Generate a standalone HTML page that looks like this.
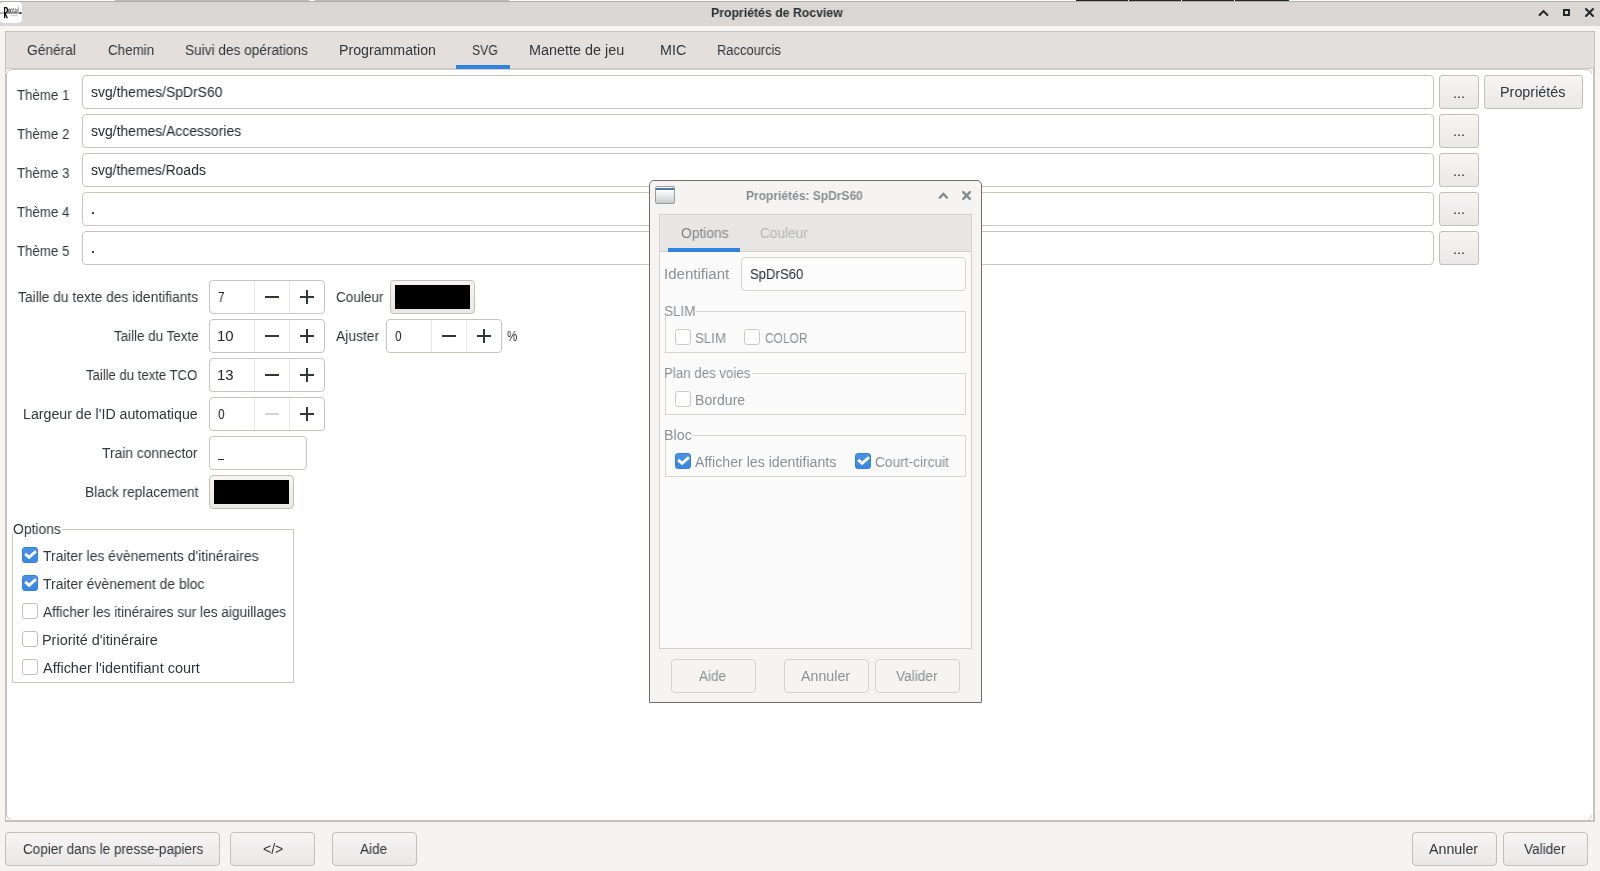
<!DOCTYPE html>
<html><head><meta charset="utf-8">
<style>
*{box-sizing:border-box;margin:0;padding:0}
html,body{width:1600px;height:871px;overflow:hidden;background:#f5f4f2;font-family:"Liberation Sans",sans-serif;font-size:13.5px;color:#31363b}
.a{position:absolute}
.t{position:absolute;white-space:pre;line-height:1;transform-origin:0 0;will-change:transform}
</style></head><body>
<div class="a" style="left:0px;top:0px;width:1600px;height:26px;background:#dad6d3"></div>
<div class="a" style="left:0px;top:0px;width:115px;height:1px;background:#fdfdfc"></div>
<div class="a" style="left:115px;top:0px;width:1485px;height:1px;background:#fdfdfc"></div>
<div class="a" style="left:115px;top:0px;width:194px;height:1px;background:#c3bab5"></div>
<div class="a" style="left:315px;top:0px;width:194px;height:1px;background:#c3bab5"></div>
<div class="a" style="left:1076px;top:0px;width:213px;height:1px;background:#20262a"></div>
<div class="a" style="left:1128px;top:0px;width:1px;height:1px;background:#fdfdfc"></div>
<div class="a" style="left:1181px;top:0px;width:1px;height:1px;background:#fdfdfc"></div>
<div class="a" style="left:1234px;top:0px;width:1px;height:1px;background:#fdfdfc"></div>
<div class="a" style="left:0px;top:1px;width:1600px;height:1px;background:#b2ada7"></div>
<div class="a" style="left:0px;top:2px;width:22px;height:21px;background:#fff;border-radius:4px"></div>
<svg class="a" style="left:0;top:0" width="23" height="26" viewBox="0 0 23 26"><path d="M0 13.1H20.5" stroke="#4a4a4a" stroke-width="0.8"/><circle cx="20.6" cy="13.1" r="1.1" fill="#222"/><path d="M4.6 18.3V7.6h1.3c1.1 0 1.6 1.1 1.6 2.5s-.6 2.5-1.6 2.5H4.8L7.3 18.3" fill="none" stroke="#111" stroke-width="1.25"/><ellipse cx="9.2" cy="10.8" rx="0.9" ry="2" fill="none" stroke="#333" stroke-width="0.8"/><path d="M11.9 9.2c-.5-.6-1.6-.3-1.6 1.6s1.1 2.2 1.6 1.6" fill="none" stroke="#333" stroke-width="0.8"/><path d="M12.9 13V8.8M12.9 9.6c.3-.7.9-.9 1.3-.8" fill="none" stroke="#333" stroke-width="0.8"/><path d="M14.8 9.2c.5-.4 1.4-.3 1.4.6V13M16.2 10.8c-1.4 0-1.8.6-1.8 1.2s.5 1 1.8.6" fill="none" stroke="#444" stroke-width="0.75"/><path d="M17.3 13V8.6M18.6 13V6.4" fill="none" stroke="#999" stroke-width="0.8"/><path d="M11.2 15.7H17.8" stroke="#c9c9c9" stroke-width="1.1"/></svg>
<svg class="a" style="left:1536px;top:6px" width="60" height="14" viewBox="0 0 60 14"><path d="M3.6 9L7.5 5.1L11.4 9" fill="none" stroke="#232629" stroke-width="2" stroke-linecap="round"/><rect x="28" y="4" width="5" height="5" fill="none" stroke="#232629" stroke-width="2"/><path d="M50 3L57 10M57 3L50 10" fill="none" stroke="#232629" stroke-width="2" stroke-linecap="round"/></svg>
<div class="a" style="left:5px;top:31px;width:1590px;height:791px;background:#fff;border:1px solid #c7c1bc;border-radius:0"></div>
<div class="a" style="left:6px;top:32px;width:1588px;height:37px;background:#e2dfdc"></div>
<div class="a" style="left:6px;top:68px;width:1588px;height:1px;background:#cdc7c2"></div>
<div class="a" style="left:6px;top:69px;width:1588px;height:1px;background:#d6d0cb"></div>
<div class="a" style="left:5px;top:820px;width:1590px;height:2px;background:#c7c1bc"></div>
<div class="a" style="left:1593px;top:69px;width:2px;height:753px;background:#c7c1bc"></div>
<div class="a" style="left:5px;top:69px;width:2px;height:753px;background:#c7c1bc"></div>
<div class="a" style="left:456px;top:65px;width:54px;height:4px;background:#3183e0"></div>
<svg class="a" style="left:6px;top:69px" width="5" height="5" viewBox="0 0 5 5"><rect width="5" height="5" fill="#fff"/><path d="M1 5A4 4 0 0 1 5 1" fill="none" stroke="#d3cdc8" stroke-width="1"/></svg>
<svg class="a" style="left:1588px;top:69px" width="5" height="5" viewBox="0 0 5 5"><rect width="5" height="5" fill="#fff"/><path d="M0 1A4 4 0 0 1 4 5" fill="none" stroke="#d3cdc8" stroke-width="1"/></svg>
<svg class="a" style="left:6px;top:815px" width="5" height="5" viewBox="0 0 5 5"><rect width="5" height="5" fill="#fff"/><path d="M1 0A4 4 0 0 0 5 4" fill="none" stroke="#d3cdc8" stroke-width="1"/></svg>
<svg class="a" style="left:1588px;top:815px" width="5" height="5" viewBox="0 0 5 5"><rect width="5" height="5" fill="#fff"/><path d="M0 4A4 4 0 0 0 4 0" fill="none" stroke="#d3cdc8" stroke-width="1"/></svg>
<div class="a" style="left:82px;top:75px;width:1352px;height:34px;background:#fff;border:1px solid #c9c3be;border-radius:4px"></div>
<div class="a" style="left:1439px;top:75px;width:40px;height:34px;background:linear-gradient(#f6f5f4,#eae8e6);border:1px solid #c5beb9;border-radius:3px"></div>
<div class="a" style="left:82px;top:114px;width:1352px;height:34px;background:#fff;border:1px solid #c9c3be;border-radius:4px"></div>
<div class="a" style="left:1439px;top:114px;width:40px;height:34px;background:linear-gradient(#f6f5f4,#eae8e6);border:1px solid #c5beb9;border-radius:3px"></div>
<div class="a" style="left:82px;top:153px;width:1352px;height:34px;background:#fff;border:1px solid #c9c3be;border-radius:4px"></div>
<div class="a" style="left:1439px;top:153px;width:40px;height:34px;background:linear-gradient(#f6f5f4,#eae8e6);border:1px solid #c5beb9;border-radius:3px"></div>
<div class="a" style="left:82px;top:192px;width:1352px;height:34px;background:#fff;border:1px solid #c9c3be;border-radius:4px"></div>
<div class="a" style="left:1439px;top:192px;width:40px;height:34px;background:linear-gradient(#f6f5f4,#eae8e6);border:1px solid #c5beb9;border-radius:3px"></div>
<div class="a" style="left:92px;top:212px;width:2px;height:2px;background:#333;border-radius:0.5px"></div>
<div class="a" style="left:82px;top:231px;width:1352px;height:34px;background:#fff;border:1px solid #c9c3be;border-radius:4px"></div>
<div class="a" style="left:1439px;top:231px;width:40px;height:34px;background:linear-gradient(#f6f5f4,#eae8e6);border:1px solid #c5beb9;border-radius:3px"></div>
<div class="a" style="left:92px;top:251px;width:2px;height:2px;background:#333;border-radius:0.5px"></div>
<div class="a" style="left:1484px;top:75px;width:99px;height:34px;background:linear-gradient(#f6f5f4,#eae8e6);border:1px solid #c5beb9;border-radius:3px"></div>
<div class="a" style="left:209px;top:280px;width:116px;height:34px;background:#fff;border:1px solid #c9c3be;border-radius:4px"></div>
<div class="a" style="left:254px;top:281px;width:1px;height:32px;background:#ebe7e4"></div>
<div class="a" style="left:289px;top:281px;width:1px;height:32px;background:#ebe7e4"></div>
<div class="a" style="left:265px;top:296px;width:14px;height:2px;background:#31363b"></div>
<div class="a" style="left:300px;top:296px;width:14px;height:2px;background:#31363b"></div>
<div class="a" style="left:306px;top:290px;width:2px;height:14px;background:#31363b"></div>
<div class="a" style="left:209px;top:319px;width:116px;height:34px;background:#fff;border:1px solid #c9c3be;border-radius:4px"></div>
<div class="a" style="left:254px;top:320px;width:1px;height:32px;background:#ebe7e4"></div>
<div class="a" style="left:289px;top:320px;width:1px;height:32px;background:#ebe7e4"></div>
<div class="a" style="left:265px;top:335px;width:14px;height:2px;background:#31363b"></div>
<div class="a" style="left:300px;top:335px;width:14px;height:2px;background:#31363b"></div>
<div class="a" style="left:306px;top:329px;width:2px;height:14px;background:#31363b"></div>
<div class="a" style="left:209px;top:358px;width:116px;height:34px;background:#fff;border:1px solid #c9c3be;border-radius:4px"></div>
<div class="a" style="left:254px;top:359px;width:1px;height:32px;background:#ebe7e4"></div>
<div class="a" style="left:289px;top:359px;width:1px;height:32px;background:#ebe7e4"></div>
<div class="a" style="left:265px;top:374px;width:14px;height:2px;background:#31363b"></div>
<div class="a" style="left:300px;top:374px;width:14px;height:2px;background:#31363b"></div>
<div class="a" style="left:306px;top:368px;width:2px;height:14px;background:#31363b"></div>
<div class="a" style="left:209px;top:397px;width:116px;height:34px;background:#fff;border:1px solid #c9c3be;border-radius:4px"></div>
<div class="a" style="left:254px;top:398px;width:1px;height:32px;background:#ebe7e4"></div>
<div class="a" style="left:289px;top:398px;width:1px;height:32px;background:#ebe7e4"></div>
<div class="a" style="left:265px;top:413px;width:14px;height:2px;background:#d5d2cf"></div>
<div class="a" style="left:300px;top:413px;width:14px;height:2px;background:#31363b"></div>
<div class="a" style="left:306px;top:407px;width:2px;height:14px;background:#31363b"></div>
<div class="a" style="left:386px;top:319px;width:116px;height:34px;background:#fff;border:1px solid #c9c3be;border-radius:4px"></div>
<div class="a" style="left:431px;top:320px;width:1px;height:32px;background:#ebe7e4"></div>
<div class="a" style="left:466px;top:320px;width:1px;height:32px;background:#ebe7e4"></div>
<div class="a" style="left:442px;top:335px;width:14px;height:2px;background:#31363b"></div>
<div class="a" style="left:477px;top:335px;width:14px;height:2px;background:#31363b"></div>
<div class="a" style="left:483px;top:329px;width:2px;height:14px;background:#31363b"></div>
<div class="a" style="left:390px;top:280px;width:85px;height:34px;background:linear-gradient(#f6f5f4,#eae8e6);border:1px solid #c5beb9;border-radius:4px"></div>
<div class="a" style="left:395px;top:285px;width:75px;height:24px;background:#000"></div>
<div class="a" style="left:209px;top:436px;width:98px;height:34px;background:#fff;border:1px solid #c9c3be;border-radius:4px"></div>
<div class="a" style="left:218px;top:459px;width:6px;height:1px;background:#333"></div>
<div class="a" style="left:209px;top:475px;width:85px;height:34px;background:linear-gradient(#f6f5f4,#eae8e6);border:1px solid #c5beb9;border-radius:4px"></div>
<div class="a" style="left:214px;top:480px;width:75px;height:24px;background:#000"></div>
<div class="a" style="left:12px;top:529px;width:282px;height:154px;border:1px solid #cdc7c2"></div>
<div class="a" style="left:12px;top:520px;width:50px;height:14px;background:#fff"></div>
<svg class="a" style="left:22px;top:547px" width="16" height="16" viewBox="0 0 16 16"><defs><linearGradient id="cg" x1="0" y1="0" x2="0" y2="1"><stop offset="0" stop-color="#4c92e5"/><stop offset="1" stop-color="#3a86e1"/></linearGradient></defs><rect x="0.5" y="0.5" width="15" height="15" rx="2.6" fill="url(#cg)" stroke="#2f7fdf"/><path d="M4.3 7.8L7.1 10.3L12.9 5.2" fill="none" stroke="#fff" stroke-width="2.9" stroke-linecap="square"/></svg>
<svg class="a" style="left:22px;top:575px" width="16" height="16" viewBox="0 0 16 16"><defs><linearGradient id="cg" x1="0" y1="0" x2="0" y2="1"><stop offset="0" stop-color="#4c92e5"/><stop offset="1" stop-color="#3a86e1"/></linearGradient></defs><rect x="0.5" y="0.5" width="15" height="15" rx="2.6" fill="url(#cg)" stroke="#2f7fdf"/><path d="M4.3 7.8L7.1 10.3L12.9 5.2" fill="none" stroke="#fff" stroke-width="2.9" stroke-linecap="square"/></svg>
<div class="a" style="left:22px;top:603px;width:16px;height:16px;background:#fff;border:1px solid #c4bdb8;border-radius:3px"></div>
<div class="a" style="left:22px;top:631px;width:16px;height:16px;background:#fff;border:1px solid #c4bdb8;border-radius:3px"></div>
<div class="a" style="left:22px;top:659px;width:16px;height:16px;background:#fff;border:1px solid #c4bdb8;border-radius:3px"></div>
<div class="a" style="left:5px;top:832px;width:215px;height:34px;background:linear-gradient(#f6f5f4,#eae8e6);border:1px solid #c5beb9;border-radius:4px"></div>
<div class="a" style="left:230px;top:832px;width:85px;height:34px;background:linear-gradient(#f6f5f4,#eae8e6);border:1px solid #c5beb9;border-radius:4px"></div>
<div class="a" style="left:332px;top:832px;width:85px;height:34px;background:linear-gradient(#f6f5f4,#eae8e6);border:1px solid #c5beb9;border-radius:4px"></div>
<div class="a" style="left:1412px;top:832px;width:85px;height:34px;background:linear-gradient(#f6f5f4,#eae8e6);border:1px solid #c5beb9;border-radius:4px"></div>
<div class="a" style="left:1503px;top:832px;width:85px;height:34px;background:linear-gradient(#f6f5f4,#eae8e6);border:1px solid #c5beb9;border-radius:4px"></div>
<div class="a" style="left:649px;top:180px;width:333px;height:523px;background:#f5f4f2;border:1px solid #6f6f6f;border-radius:5px 5px 1px 1px"></div>
<div class="a" style="left:655px;top:186px;width:20px;height:18px;border:1px solid #9a9d9f;border-radius:2px;background:linear-gradient(#fff 20%,#c8cbcc)"></div>
<div class="a" style="left:656px;top:188px;width:18px;height:2px;background:#4f77b0"></div>
<svg class="a" style="left:935px;top:186px" width="40" height="18" viewBox="0 0 40 18"><path d="M4.8 11.6L8.4 8L12 11.6" fill="none" stroke="#858a8c" stroke-width="2.3" stroke-linecap="round"/><path d="M28.2 6.1L34.9 12.8M34.9 6.1L28.2 12.8" fill="none" stroke="#858a8c" stroke-width="2.4" stroke-linecap="round"/></svg>
<div class="a" style="left:659px;top:214px;width:313px;height:435px;background:#fafafa;border:1px solid #d5d1cd"></div>
<div class="a" style="left:660px;top:215px;width:311px;height:36px;background:#e8e6e4"></div>
<div class="a" style="left:660px;top:251px;width:311px;height:1px;background:#d5d1cd"></div>
<div class="a" style="left:668px;top:248px;width:72px;height:4px;background:#3183e0"></div>
<div class="a" style="left:741px;top:257px;width:225px;height:34px;background:#fcfcfc;border:1px solid #d8d4d0;border-radius:4px"></div>
<div class="a" style="left:665px;top:311px;width:301px;height:42px;border:1px solid #d8d4d0"></div>
<div class="a" style="left:664px;top:304px;width:32.299999999999955px;height:12px;background:#fafafa"></div>
<div class="a" style="left:665px;top:373px;width:301px;height:42px;border:1px solid #d8d4d0"></div>
<div class="a" style="left:664px;top:366px;width:87.79999999999995px;height:12px;background:#fafafa"></div>
<div class="a" style="left:665px;top:435px;width:301px;height:42px;border:1px solid #d8d4d0"></div>
<div class="a" style="left:664px;top:428px;width:29px;height:12px;background:#fafafa"></div>
<div class="a" style="left:675px;top:329px;width:16px;height:16px;background:#fff;border:1px solid #cfc9c4;border-radius:3px"></div>
<div class="a" style="left:744px;top:329px;width:16px;height:16px;background:#fff;border:1px solid #cfc9c4;border-radius:3px"></div>
<div class="a" style="left:675px;top:391px;width:16px;height:16px;background:#fff;border:1px solid #cfc9c4;border-radius:3px"></div>
<svg class="a" style="left:675px;top:453px" width="16" height="16" viewBox="0 0 16 16"><defs><linearGradient id="cg" x1="0" y1="0" x2="0" y2="1"><stop offset="0" stop-color="#4c92e5"/><stop offset="1" stop-color="#3a86e1"/></linearGradient></defs><rect x="0.5" y="0.5" width="15" height="15" rx="2.6" fill="url(#cg)" stroke="#2f7fdf"/><path d="M4.3 7.8L7.1 10.3L12.9 5.2" fill="none" stroke="#fff" stroke-width="2.9" stroke-linecap="square"/></svg>
<svg class="a" style="left:855px;top:453px" width="16" height="16" viewBox="0 0 16 16"><defs><linearGradient id="cg" x1="0" y1="0" x2="0" y2="1"><stop offset="0" stop-color="#4c92e5"/><stop offset="1" stop-color="#3a86e1"/></linearGradient></defs><rect x="0.5" y="0.5" width="15" height="15" rx="2.6" fill="url(#cg)" stroke="#2f7fdf"/><path d="M4.3 7.8L7.1 10.3L12.9 5.2" fill="none" stroke="#fff" stroke-width="2.9" stroke-linecap="square"/></svg>
<div class="a" style="left:671px;top:659px;width:85px;height:34px;background:#f5f4f2;border:1px solid #d6d2ce;border-radius:4px"></div>
<div class="a" style="left:784px;top:659px;width:85px;height:34px;background:#f5f4f2;border:1px solid #d6d2ce;border-radius:4px"></div>
<div class="a" style="left:875px;top:659px;width:85px;height:34px;background:#f5f4f2;border:1px solid #d6d2ce;border-radius:4px"></div>
<div class="t" style="left:710.70px;top:6px;font-size:13px;color:#2b3034;font-weight:bold;transform:scaleX(0.9450)">Propriétés de Rocview</div>
<div class="t" style="left:26.60px;top:43px;font-size:14px;color:#31363b;transform:scaleX(0.9816)">Général</div>
<div class="t" style="left:107.50px;top:43px;font-size:14px;color:#31363b;transform:scaleX(0.9563)">Chemin</div>
<div class="t" style="left:185.33px;top:43px;font-size:14px;color:#31363b;transform:scaleX(0.9744)">Suivi des opérations</div>
<div class="t" style="left:339.39px;top:43px;font-size:14px;color:#31363b;transform:scaleX(1.0128)">Programmation</div>
<div class="t" style="left:472.33px;top:43px;font-size:14px;color:#31363b;transform:scaleX(0.8714)">SVG</div>
<div class="t" style="left:529.07px;top:43px;font-size:14px;color:#31363b;transform:scaleX(1.0275)">Manette de jeu</div>
<div class="t" style="left:660.38px;top:43px;font-size:14px;color:#31363b;transform:scaleX(1.0208)">MIC</div>
<div class="t" style="left:717.28px;top:43px;font-size:14px;color:#31363b;transform:scaleX(0.9221)">Raccourcis</div>
<div class="t" style="left:17.20px;top:88px;font-size:14px;color:#31363b;transform:scaleX(0.9491)">Thème 1</div>
<div class="t" style="left:1452.68px;top:86px;font-size:14px;color:#232629;transform:scaleX(1.0200)">...</div>
<div class="t" style="left:91.00px;top:85px;font-size:14px;color:#232629;transform:scaleX(0.9939)">svg/themes/SpDrS60</div>
<div class="t" style="left:17.20px;top:127px;font-size:14px;color:#31363b;transform:scaleX(0.9491)">Thème 2</div>
<div class="t" style="left:1452.68px;top:124px;font-size:14px;color:#232629;transform:scaleX(1.0200)">...</div>
<div class="t" style="left:91.00px;top:124px;font-size:14px;color:#232629;transform:scaleX(0.9947)">svg/themes/Accessories</div>
<div class="t" style="left:17.20px;top:166px;font-size:14px;color:#31363b;transform:scaleX(0.9491)">Thème 3</div>
<div class="t" style="left:1452.68px;top:164px;font-size:14px;color:#232629;transform:scaleX(1.0200)">...</div>
<div class="t" style="left:91.00px;top:163px;font-size:14px;color:#232629;transform:scaleX(0.9897)">svg/themes/Roads</div>
<div class="t" style="left:17.20px;top:205px;font-size:14px;color:#31363b;transform:scaleX(0.9491)">Thème 4</div>
<div class="t" style="left:1452.68px;top:202px;font-size:14px;color:#232629;transform:scaleX(1.0200)">...</div>
<div class="t" style="left:17.20px;top:244px;font-size:14px;color:#31363b;transform:scaleX(0.9491)">Thème 5</div>
<div class="t" style="left:1452.68px;top:242px;font-size:14px;color:#232629;transform:scaleX(1.0200)">...</div>
<div class="t" style="left:1500.47px;top:85px;font-size:14px;color:#31363b;transform:scaleX(1.0270)">Propriétés</div>
<div class="t" style="left:17.60px;top:290px;font-size:14px;color:#31363b;transform:scaleX(0.9847)">Taille du texte des identifiants</div>
<div class="t" style="left:113.60px;top:329px;font-size:14px;color:#31363b;transform:scaleX(0.9568)">Taille du Texte</div>
<div class="t" style="left:86.40px;top:368px;font-size:14px;color:#31363b;transform:scaleX(0.9361)">Taille du texte TCO</div>
<div class="t" style="left:23.49px;top:407px;font-size:14px;color:#31363b;transform:scaleX(1.0135)">Largeur de l'ID automatique</div>
<div class="t" style="left:102.00px;top:446px;font-size:14px;color:#31363b;transform:scaleX(0.9876)">Train connector</div>
<div class="t" style="left:84.51px;top:485px;font-size:14px;color:#31363b;transform:scaleX(0.9851)">Black replacement</div>
<div class="t" style="left:218.20px;top:290px;font-size:14px;color:#232629;transform:scaleX(0.8500)">7</div>
<div class="t" style="left:217.14px;top:329px;font-size:14px;color:#232629;transform:scaleX(1.0643)">10</div>
<div class="t" style="left:217.14px;top:368px;font-size:14px;color:#232629;transform:scaleX(1.0643)">13</div>
<div class="t" style="left:218.20px;top:407px;font-size:14px;color:#232629;transform:scaleX(0.8625)">0</div>
<div class="t" style="left:395.20px;top:329px;font-size:14px;color:#232629;transform:scaleX(0.8500)">0</div>
<div class="t" style="left:335.50px;top:290px;font-size:14px;color:#31363b;transform:scaleX(0.9694)">Couleur</div>
<div class="t" style="left:335.50px;top:329px;font-size:14px;color:#31363b;transform:scaleX(0.9886)">Ajuster</div>
<div class="t" style="left:507.40px;top:329px;font-size:14px;color:#31363b;transform:scaleX(0.8250)">%</div>
<div class="t" style="left:12.60px;top:522px;font-size:14px;color:#31363b;transform:scaleX(0.9896)">Options</div>
<div class="t" style="left:42.60px;top:549px;font-size:14px;color:#31363b;transform:scaleX(0.9931)">Traiter les évènements d'itinéraires</div>
<div class="t" style="left:42.60px;top:577px;font-size:14px;color:#31363b;transform:scaleX(0.9963)">Traiter évènement de bloc</div>
<div class="t" style="left:42.60px;top:605px;font-size:14px;color:#31363b;transform:scaleX(0.9767)">Afficher les itinéraires sur les aiguillages</div>
<div class="t" style="left:41.57px;top:633px;font-size:14px;color:#31363b;transform:scaleX(1.0306)">Priorité d'itinéraire</div>
<div class="t" style="left:42.60px;top:661px;font-size:14px;color:#31363b;transform:scaleX(1.0329)">Afficher l'identifiant court</div>
<div class="t" style="left:22.50px;top:842px;font-size:14px;color:#31363b;transform:scaleX(0.9652)">Copier dans le presse-papiers</div>
<div class="t" style="left:262.70px;top:842px;font-size:14px;color:#31363b;transform:scaleX(0.9800)">&lt;/&gt;</div>
<div class="t" style="left:360.20px;top:842px;font-size:14px;color:#31363b;transform:scaleX(0.9679)">Aide</div>
<div class="t" style="left:1429.00px;top:842px;font-size:14px;color:#31363b;transform:scaleX(1.0167)">Annuler</div>
<div class="t" style="left:1524.00px;top:842px;font-size:14px;color:#31363b;transform:scaleX(0.9744)">Valider</div>
<div class="t" style="left:745.70px;top:190px;font-size:12.5px;color:#8a8d90;font-weight:bold;transform:scaleX(0.9612)">Propriétés: SpDrS60</div>
<div class="t" style="left:680.60px;top:226px;font-size:14px;color:#828689;transform:scaleX(0.9854)">Options</div>
<div class="t" style="left:760.30px;top:226px;font-size:14px;color:#b4b6b8;transform:scaleX(0.9735)">Couleur</div>
<div class="t" style="left:664.12px;top:267px;font-size:14px;color:#8c9093;transform:scaleX(1.0750)">Identifiant</div>
<div class="t" style="left:749.56px;top:267px;font-size:14px;color:#2a2e32;transform:scaleX(0.9375)">SpDrS60</div>
<div class="t" style="left:664.44px;top:304px;font-size:14px;color:#8c9093;transform:scaleX(0.9645)">SLIM</div>
<div class="t" style="left:664.45px;top:366px;font-size:14px;color:#8c9093;transform:scaleX(0.9489)">Plan des voies</div>
<div class="t" style="left:664.38px;top:428px;font-size:14px;color:#8c9093;transform:scaleX(1.0231)">Bloc</div>
<div class="t" style="left:694.65px;top:331px;font-size:14px;color:#8c9093;transform:scaleX(0.9516)">SLIM</div>
<div class="t" style="left:764.70px;top:331px;font-size:14px;color:#8c9093;transform:scaleX(0.8531)">COLOR</div>
<div class="t" style="left:694.59px;top:393px;font-size:14px;color:#8c9093;transform:scaleX(1.0082)">Bordure</div>
<div class="t" style="left:695.40px;top:455px;font-size:14px;color:#8c9093;transform:scaleX(1.0107)">Afficher les identifiants</div>
<div class="t" style="left:875.20px;top:455px;font-size:14px;color:#8c9093;transform:scaleX(0.9789)">Court-circuit</div>
<div class="t" style="left:699.00px;top:669px;font-size:14px;color:#8c9093;transform:scaleX(0.9643)">Aide</div>
<div class="t" style="left:801.20px;top:669px;font-size:14px;color:#8c9093;transform:scaleX(1.0167)">Annuler</div>
<div class="t" style="left:896.00px;top:669px;font-size:14px;color:#8c9093;transform:scaleX(0.9767)">Valider</div>
</body></html>
